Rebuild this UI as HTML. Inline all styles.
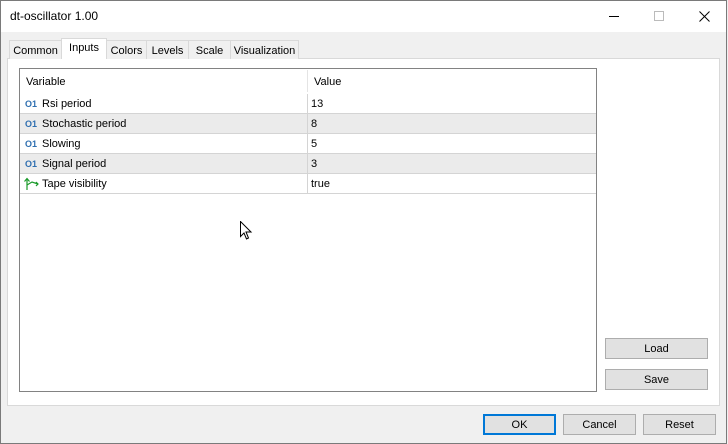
<!DOCTYPE html>
<html><head><meta charset="utf-8"><style>
*{box-sizing:border-box;margin:0;padding:0}
body{width:728px;height:444px;overflow:hidden;background:#f0f0f0;font-family:"Liberation Sans",sans-serif;font-size:11px;color:#000;position:relative}
.win{position:absolute;left:0;top:0;width:727px;height:444px;border:1px solid #7a7a7a;background:#f0f0f0}
.title{position:absolute;left:0;top:0;width:725px;height:31px;background:#fff}
.title span{position:absolute;left:9px;top:8px;font-size:12px}
.tab{position:absolute;top:40px;height:19px;border:1px solid #d9d9d9;border-bottom:none;background:#f0f0f0;text-align:center;line-height:20px;font-size:11px}
.tab.sel{top:38px;height:21px;background:#fff;z-index:2;line-height:19px}
.panel{position:absolute;left:7px;top:58px;width:713px;height:348px;background:#fff;border:1px solid #d9d9d9}
.list{position:absolute;left:19px;top:68px;width:578px;height:324px;border:1px solid #828282;background:#fff}
.row{position:absolute;left:0;width:576px;height:20px;border-bottom:1px solid #d4d4d4;line-height:21px}
.row.g{background:#ebebeb}
.row .n{position:absolute;left:22px}
.row .v{position:absolute;left:287px;border-left:1px solid #d4d4d4;padding-left:3px;height:19px}
.ic{position:absolute;left:5px;top:0;color:#2f6fb0;font-size:9px;font-weight:bold}
.btn{position:absolute;height:21px;border:1px solid #adadad;background:#e1e1e1;text-align:center;line-height:21px;font-size:11px}
</style></head><body>
<div class="win">
<div class="title"><span>dt-oscillator 1.00</span>
<div style="position:absolute;left:608px;top:15px;width:10px;height:1px;background:#000"></div>
<div style="position:absolute;left:653px;top:10px;width:10px;height:10px;border:1px solid #bbb"></div>
<svg style="position:absolute;left:698px;top:10px" width="11" height="11"><path d="M0.5 0.5L10.5 10.5M10.5 0.5L0.5 10.5" stroke="#000" stroke-width="1"/></svg>
</div>
</div>
<div class="panel"></div>
<div class="tab" style="left:9px;width:53px">Common</div>
<div class="tab sel" style="left:61px;width:46px">Inputs</div>
<div class="tab" style="left:106px;width:41px">Colors</div>
<div class="tab" style="left:146px;width:43px">Levels</div>
<div class="tab" style="left:188px;width:43px">Scale</div>
<div class="tab" style="left:230px;width:69px">Visualization</div>
<div class="list">
<div class="row" style="top:1px;height:24px;border-bottom:none;line-height:25px"><span style="position:absolute;left:6px">Variable</span><span style="position:absolute;left:287px;border-left:1px solid #e4e4e4;padding-left:6px;height:22px">Value</span></div>
<div class="row" style="top:25px"><span class="ic">O1</span><span class="n">Rsi period</span><span class="v">13</span></div>
<div class="row g" style="top:45px"><span class="ic">O1</span><span class="n">Stochastic period</span><span class="v">8</span></div>
<div class="row" style="top:65px"><span class="ic">O1</span><span class="n">Slowing</span><span class="v">5</span></div>
<div class="row g" style="top:85px"><span class="ic">O1</span><span class="n">Signal period</span><span class="v">3</span></div>
<div class="row" style="top:105px"><svg style="position:absolute;left:4px;top:3px" width="15" height="14"><path d="M3 13V2M0.5 4.5L3 1.5L5.5 4.5M3 8L8 5L14 7M12 5L14 7L12 9" stroke="#1a9a2a" stroke-width="1.2" fill="none"/></svg><span class="n">Tape visibility</span><span class="v">true</span></div>
</div>
<svg style="position:absolute;left:240px;top:221px" width="13" height="19"><path d="M0.5 0.5V15.5L4 12L6.5 18L8.5 17L6 11H11Z" fill="#fff" stroke="#000" stroke-width="1"/></svg>
<div class="btn" style="left:605px;top:338px;width:103px">Load</div>
<div class="btn" style="left:605px;top:369px;width:103px">Save</div>
<div class="btn" style="left:483px;top:414px;width:73px;border:2px solid #0078d7;line-height:19px">OK</div>
<div class="btn" style="left:563px;top:414px;width:73px">Cancel</div>
<div class="btn" style="left:643px;top:414px;width:73px">Reset</div>
</body></html>
